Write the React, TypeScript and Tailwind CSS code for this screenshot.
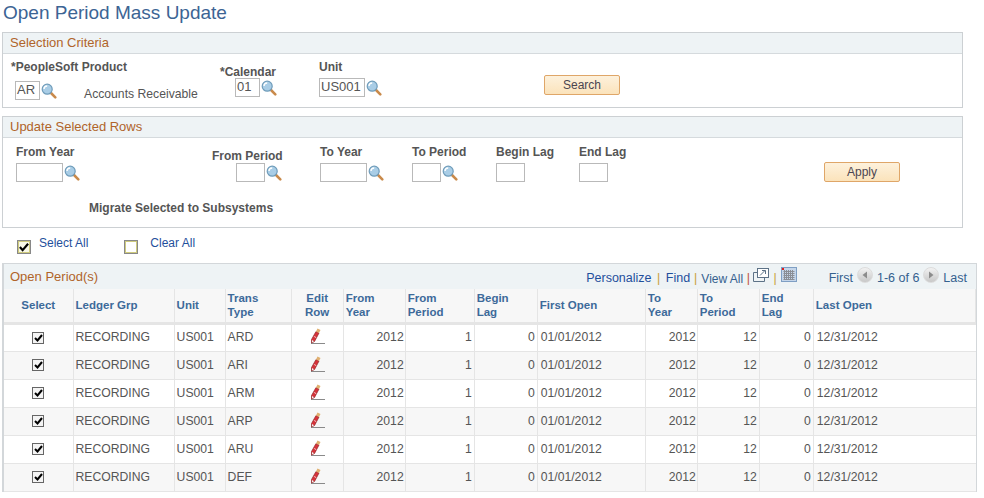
import React from "react"

const rows = ["ARD", "ARI", "ARM", "ARP", "ARU", "DEF"]

const Lookup = () => (
  <svg width="16" height="16" viewBox="0 0 16 16" className="ml-[1px] shrink-0">
    <path d="M9.5 9.5 L14.3 14.3" stroke="#c98a4b" strokeWidth="2.6" strokeLinecap="round" />
    <circle cx="6.2" cy="6.2" r="5" fill="#a9cde6" stroke="#6f9cba" strokeWidth="1.2" />
    <path d="M3 6 A3.2 3.2 0 0 1 6.2 3" stroke="#ffffff" strokeWidth="1.4" fill="none" />
  </svg>
)

const Pencil = () => (
  <svg width="15" height="16" viewBox="0 0 15 16">
    <path d="M1 15.5 L15 15.5" stroke="#8a8a8a" strokeWidth="1" />
    <path d="M1.5 15 L1.5 11.5 L6 3.5 L9 5 L4.5 13.5 Z" fill="#d8323a" stroke="#8d2a2a" strokeWidth="0.7" />
    <path d="M6 3.5 L7.5 0.5 L10.5 2 L9 5 Z" fill="#e0b070" />
    <path d="M2 14.5 L2 12 L4 13.2 Z" fill="#f4f4f4" />
    <path d="M4.2 8.5 L6.2 9.6" stroke="#f4c8c8" strokeWidth="1" />
  </svg>
)

const GridIcon = () => (
  <svg width="16" height="15" viewBox="0 0 16 15" className="-mt-[8px]">
    <rect x="0.5" y="0.5" width="15" height="14" fill="#c5d6ea" stroke="#7f9fc4" />
    <path d="M2.5 4.5H13.5M2.5 6.5H13.5M2.5 8.5H13.5M2.5 10.5H13.5M2.5 12.5H13.5M3.5 3V13M5.5 3V13M7.5 3V13M9.5 3V13M11.5 3V13" stroke="#8b8f96" strokeWidth="1" />
    <rect x="1" y="1" width="2" height="2" fill="#e01b1b" />
  </svg>
)

const PopupIcon = () => (
  <svg width="16" height="14" viewBox="0 0 16 14" fill="none" stroke="#5d7287" className="-mt-[8px]">
    <rect x="4.5" y="0.5" width="11" height="9" fill="#fff" />
    <path d="M4.5 4.5H0.5V13.5H11.5V9.5" />
    <path d="M7 7.5L12 2.5M9 2.5H12.5V6" />
  </svg>
)

const NavButton = ({ dir }: { dir: "left" | "right" }) => (
  <span className="-mt-[8px] inline-flex h-[16px] w-[16px] items-center justify-center rounded-full border border-[#dcdcdc] bg-gradient-to-b from-[#f2f2f2] to-[#c8c8c8]">
    <svg width="6" height="8" viewBox="0 0 6 8">
      <path d={dir === "left" ? "M5 0.5V7.5L0.5 4Z" : "M1 0.5V7.5L5.5 4Z"} fill="#8c8c8c" />
    </svg>
  </span>
)

const TextBox = ({ w, value }: { w: string; value?: string }) => (
  <div className={`${w} h-[19px] border border-[#b9b9b9] bg-white px-[1px] text-[13px] leading-[15px] text-[#555]`}>
    {value}
  </div>
)

const SectionHead = ({ title }: { title: string }) => (
  <div className="h-[21px] border-b border-[#d5dadd] bg-[#eef3f5] pl-[7px] text-[13px] leading-[20px] text-[#b0642a]">
    {title}
  </div>
)

const OrangeButton = ({ label }: { label: string }) => (
  <div className="flex h-[20px] w-[76px] items-center justify-center rounded-[2px] border border-[#dfa668] bg-gradient-to-b from-[#fdf1dc] to-[#fbe3bb] text-[12px] text-[#4b4550]">
    {label}
  </div>
)

const headers = [
  { t: ["Select"], center: true },
  { t: ["Ledger Grp"] },
  { t: ["Unit"] },
  { t: ["Trans", "Type"] },
  { t: ["Edit", "Row"], center: true },
  { t: ["From", "Year"] },
  { t: ["From", "Period"] },
  { t: ["Begin", "Lag"] },
  { t: ["First Open"] },
  { t: ["To", "Year"] },
  { t: ["To", "Period"] },
  { t: ["End", "Lag"] },
  { t: ["Last Open"] },
]

const widths = ["w-[69px]", "w-[101px]", "w-[51px]", "w-[66px]", "w-[52px]", "w-[62px]", "w-[69px]", "w-[63px]", "w-[108px]", "w-[52px]", "w-[62px]", "w-[54px]", "w-[162px]"]

export default function App() {
  return (
    <div className="h-[498px] w-[984px] overflow-hidden bg-white font-['Liberation_Sans',Arial,sans-serif] text-[12.2px] text-[#555]">
      <h1 className="h-[32px] pl-[3px] pt-[1px] text-[19px] leading-[24px] text-[#3c6494]">Open Period Mass Update</h1>

      <section className="ml-[2px] h-[76px] w-[961px] border border-[#ccd0d3]">
        <SectionHead title="Selection Criteria" />
        <div className="flex">
          <div className="w-[217px] pl-[8px] pt-[5px]">
            <div className="h-[19px] text-[12px] font-bold leading-[16px]">*PeopleSoft Product</div>
            <div className="flex items-center pl-[4px]">
              <TextBox w="w-[25px]" value="AR" />
              <Lookup />
              <span className="ml-[27px] mt-[7px]">Accounts Receivable</span>
            </div>
          </div>
          <div className="w-[99px] pt-[10px]">
            <div className="h-[14px] text-[12px] font-bold leading-[16px]">*Calendar</div>
            <div className="flex items-center pl-[15px]">
              <TextBox w="w-[25px]" value="01" />
              <Lookup />
            </div>
          </div>
          <div className="w-[225px] pt-[5px]">
            <div className="h-[19px] text-[12px] font-bold leading-[16px]">Unit</div>
            <div className="flex items-center">
              <TextBox w="w-[46px]" value="US001" />
              <Lookup />
            </div>
          </div>
          <div className="pt-[21px]">
            <OrangeButton label="Search" />
          </div>
        </div>
      </section>

      <section className="ml-[2px] mt-[8px] h-[112px] w-[961px] border border-[#ccd0d3]">
        <SectionHead title="Update Selected Rows" />
        <div className="flex text-[12px]">
          <div className="w-[196px] pl-[13px] pt-[6px]">
            <div className="h-[19px] font-bold leading-[16px]">From Year</div>
            <div className="flex items-center">
              <TextBox w="w-[47px]" />
              <Lookup />
            </div>
          </div>
          <div className="w-[121px] pl-[13px] pt-[10px]">
            <div className="h-[15px] font-bold leading-[16px]">From Period</div>
            <div className="flex items-center pl-[24px]">
              <TextBox w="w-[29px]" />
              <Lookup />
            </div>
          </div>
          <div className="w-[92px] pt-[6px]">
            <div className="h-[19px] font-bold leading-[16px]">To Year</div>
            <div className="flex items-center">
              <TextBox w="w-[47px]" />
              <Lookup />
            </div>
          </div>
          <div className="w-[84px] pt-[6px]">
            <div className="h-[19px] font-bold leading-[16px]">To Period</div>
            <div className="flex items-center">
              <TextBox w="w-[29px]" />
              <Lookup />
            </div>
          </div>
          <div className="w-[83px] pt-[6px]">
            <div className="h-[19px] font-bold leading-[16px]">Begin Lag</div>
            <TextBox w="w-[29px]" />
          </div>
          <div className="w-[245px] pt-[6px]">
            <div className="h-[19px] font-bold leading-[16px]">End Lag</div>
            <TextBox w="w-[29px]" />
          </div>
          <div className="pt-[24px]">
            <OrangeButton label="Apply" />
          </div>
        </div>
        <div className="pl-[86px] pt-[18px] text-[12px] font-bold leading-[16px]">Migrate Selected to Subsystems</div>
      </section>

      <div className="flex h-[35px] items-start pl-[17px] pt-[8px] text-[12px] text-[#1f4f9c]">
        <div className="mt-[4px] flex h-[14px] w-[14px] items-center justify-center border-2 border-[#cfcb7e] bg-[#f8f8e8] outline outline-1 outline-offset-[-1px] outline-[#888]">
          <svg width="11" height="10" viewBox="0 0 11 10">
            <path d="M1 5L4 8.5L10 1.5" stroke="#000" strokeWidth="2.4" fill="none" />
          </svg>
        </div>
        <span className="ml-[8px] leading-[14px]">Select All</span>
        <div className="ml-[36px] mt-[4px] h-[14px] w-[14px] border-2 border-[#cfcb7e] bg-white outline outline-1 outline-offset-[-1px] outline-[#888]" />
        <span className="ml-[12px] leading-[14px]">Clear All</span>
      </div>

      <section className="ml-[2px] w-[975px] border-l-2 border-r border-t border-[#d3d7da]">
        <div className="flex h-[25px] items-center bg-[#eef3f5] pl-[6px] pr-[9px]">
          <span className="text-[13px] text-[#b0642a]">Open Period(s)</span>
          <div className="ml-auto flex items-center pt-[4px] text-[12.5px] text-[#35618f]">
            <span className="text-[#1f4f9c]">Personalize</span>
            <span className="mx-[5.5px] text-[#c9a03a]">|</span>
            <span className="text-[#1f4f9c]">Find</span>
            <span className="mx-[4px] text-[#c9a03a]">|</span>
            <span className="text-[12px]">View All</span>
            <span className="mx-[3.5px] text-[#c0503a]">|</span>
            <PopupIcon />
            <span className="mx-[4px] text-[#c9a03a]">|</span>
            <GridIcon />
            <span className="ml-[32px]">First</span>
            <span className="ml-[4px] flex"><NavButton dir="left" /></span>
            <span className="ml-[4px]">1-6 of 6</span>
            <span className="ml-[4px] flex"><NavButton dir="right" /></span>
            <span className="ml-[4px]">Last</span>
          </div>
        </div>
        <table className="w-[972px] table-fixed border-collapse">
          <colgroup>
            {widths.map((w, i) => (
              <col key={i} className={w} />
            ))}
          </colgroup>
          <thead>
            <tr className="h-[34px] border-b-[3px] border-[#e5e5e5] bg-[#f7f7f7]">
              {headers.map((h) => (
                <th
                  key={h.t.join(" ")}
                  className={`border-r border-[#e5e5e5] px-[2px] text-[11.5px] font-bold leading-[14px] text-[#3d6a9a] ${h.center ? "text-center" : "text-left"}`}
                >
                  {h.t.map((line) => (
                    <div key={line}>{line}</div>
                  ))}
                </th>
              ))}
            </tr>
          </thead>
          <tbody>
            {rows.map((code, i) => (
              <tr key={code} className={`h-[28px] border-b border-[#e5e5e5] ${i % 2 ? "bg-[#f7f7f7]" : "bg-white"}`}>
                <td className="border-r border-[#e5e5e5]">
                  <div className="mx-auto flex h-[12px] w-[12px] items-center justify-center border border-[#666] bg-[#f4f4f4]">
                    <svg width="9" height="8" viewBox="0 0 9 8">
                      <path d="M1 4L3.5 6.5L8 1" stroke="#000" strokeWidth="2" fill="none" />
                    </svg>
                  </div>
                </td>
                <td className="border-r border-[#e5e5e5] px-[2px]">RECORDING</td>
                <td className="border-r border-[#e5e5e5] px-[2px]">US001</td>
                <td className="border-r border-[#e5e5e5] px-[2px]">{code}</td>
                <td className="border-r border-[#e5e5e5]">
                  <div className="mb-[3px] flex justify-center"><Pencil /></div>
                </td>
                <td className="border-r border-[#e5e5e5] px-[1px] text-right">2012</td>
                <td className="border-r border-[#e5e5e5] px-[2px] text-right">1</td>
                <td className="border-r border-[#e5e5e5] px-[2px] text-right">0</td>
                <td className="border-r border-[#e5e5e5] px-[3px]">01/01/2012</td>
                <td className="border-r border-[#e5e5e5] px-[1px] text-right">2012</td>
                <td className="border-r border-[#e5e5e5] px-[2px] text-right">12</td>
                <td className="border-r border-[#e5e5e5] px-[2px] text-right">0</td>
                <td className="px-[3px]">12/31/2012</td>
              </tr>
            ))}
          </tbody>
        </table>
      </section>
    </div>
  )
}
